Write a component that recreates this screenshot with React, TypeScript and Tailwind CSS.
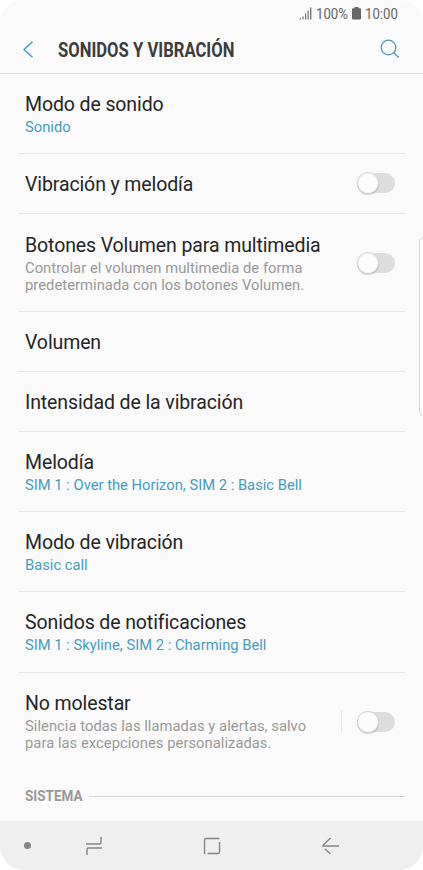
import React from 'react';

function Toggle() {
  return (
    <span role="switch" aria-checked="false" className="relative block h-[20px] w-[36px] shrink-0 rounded-full bg-[#dddddd]">
      <span className="absolute -left-[2px] -top-px h-[22px] w-[22px] rounded-full border border-[#d2d2d2] bg-[#fcfcfc] shadow-[0_1px_1px_rgba(0,0,0,0.18)]" />
    </span>
  );
}

type RowProps = {
  title: string;
  lines?: string[];
  muted?: boolean;
  toggle?: boolean;
  split?: boolean;
  last?: boolean;
  height: string;
  pad?: string;
};

function Row({ title, lines = [], muted, toggle, split, last, height, pad = 'pt-[19px]' }: RowProps) {
  return (
    <div className={`ml-[18px] mr-[18px] flex justify-between border-b pl-[7px] pr-[10px] ${height} ${last ? 'border-transparent' : 'border-[#e8e8e8]'}`}>
      <div className={`whitespace-nowrap ${pad}`}>
        <div className="text-[19.5px] leading-[24px] tracking-[-0.11px] text-[#252525]">{title}</div>
        <div className={`mt-[2px] text-[14.75px] leading-[17px] ${muted ? 'tracking-[0.04px] text-[#999999]' : 'text-[#459dbe]'}`}>
          {lines.map((line) => (
            <div key={line}>{line}</div>
          ))}
        </div>
      </div>
      {toggle && (
        <div className={`flex items-center ${muted ? '' : 'pb-px'}`}>
          {split && <span className="mr-[17px] h-[23px] w-px bg-[#e8e8e8]" />}
          <Toggle />
        </div>
      )}
    </div>
  );
}

export default function App() {
  return (
    <div className="h-[870px] w-[423px] overflow-hidden bg-white font-['Roboto',sans-serif]">
      <div className="relative flex h-full flex-col overflow-hidden rounded-t-[22px] rounded-b-[24px] bg-[#fafafa]">
        <div className="flex h-[27px] shrink-0 items-center justify-end pr-[24px] text-[14.5px] text-[#666666]">
          <svg width="13" height="13" viewBox="0 0 13 13" className="mr-[4px]" fill="#777">
            <path d="M0 12.500h2v-2zM3.500 9.500h1.200v3H3.500zM6 6.500h1.200v6H6zM8.500 3.500h1.200v9H8.500zM11 .5h1.400v12H11z" />
          </svg>
          <span className="block w-[32px] pt-[2px]"><span className="inline-block origin-left scale-x-[0.91]">100%</span></span>
          <svg width="9" height="13" viewBox="0 0 9 13" className="ml-[4px] mr-[4px]" fill="#666">
            <path d="M2.500 0h4v1.200H8a1 1 0 0 1 1 1V11.500a1 1 0 0 1-1 1H1a1 1 0 0 1-1-1V2.200a1 1 0 0 1 1-1h1.500z" />
          </svg>
          <span className="block w-[34px] pt-[2px]"><span className="inline-block origin-left scale-x-[0.91]">10:00</span></span>
        </div>
        <header className="flex h-[47px] shrink-0 items-center border-b border-[#e3e3e3] pl-[23px] pr-[23px]">
          <svg width="11" height="17" viewBox="0 0 11 17" className="mb-px" fill="none" stroke="#459dbe" strokeWidth="1.5">
            <path d="M9.500 .8L1 8.500l8.500 7.700" />
          </svg>
          <h1 className="ml-[24px] w-[300px] whitespace-nowrap pt-[2px] text-[19.5px] font-bold leading-[24px] text-[#3c3c3c]">
            <span className="inline-block origin-left scale-x-[0.853]">SONIDOS Y VIBRACIÓN</span>
          </h1>
          <svg width="20" height="20" viewBox="0 0 20 20" className="mb-[2px] ml-auto shrink-0" fill="none" stroke="#459dbe" strokeWidth="1.3">
            <circle cx="8.500" cy="8.500" r="7.300" />
            <path d="M13.700 13.700L18.800 18.500" />
          </svg>
        </header>
        <main className="flex flex-1 flex-col">
          <Row title="Modo de sonido" lines={['Sonido']} height="h-[80px]" />
          <Row title="Vibración y melodía" toggle height="h-[60px]" />
          <Row title="Botones Volumen para multimedia" lines={['Controlar el volumen multimedia de forma', 'predeterminada con los botones Volumen.']} muted toggle height="h-[98px]" pad="pt-[20px]" />
          <Row title="Volumen" height="h-[60px]" />
          <Row title="Intensidad de la vibración" height="h-[60px]" />
          <Row title="Melodía" lines={['SIM 1 : Over the Horizon, SIM 2 : Basic Bell']} height="h-[80px]" />
          <Row title="Modo de vibración" lines={['Basic call']} height="h-[80px]" />
          <Row title="Sonidos de notificaciones" lines={['SIM 1 : Skyline, SIM 2 : Charming Bell']} height="h-[81px]" />
          <Row title="No molestar" lines={['Silencia todas las llamadas y alertas, salvo', 'para las excepciones personalizadas.']} muted toggle split last height="h-[98px]" />
          <div className="flex h-[50px] items-center pl-[25px] pr-[18px]">
            <span className="block w-[64px] pt-px text-[15.5px] font-bold text-[#999999]"><span className="inline-block origin-left scale-x-[0.87]">SISTEMA</span></span>
            <span className="h-px flex-1 bg-[#d4d4d4]" />
          </div>
        </main>
        <nav className="flex h-[49px] shrink-0 items-center bg-[#efefef]">
          <span className="ml-[24px] h-[7px] w-[7px] rounded-full bg-[#858585]" />
          <svg width="18" height="20" viewBox="0 0 18 20" className="ml-[54px]" fill="none" stroke="#858585" strokeWidth="1.4">
            <path d="M1 8h13.500q1.500 0 1.500-1.500V1M17 12H3.500Q2 12 2 13.500V19" />
          </svg>
          <svg width="18" height="18" viewBox="0 0 18 18" className="ml-[100px]" fill="none" stroke="#858585" strokeWidth="1.4">
            <path d="M1.500 17V3q0-1.500 1.500-1.500h13.500M16.500 5v10q0 1.500-1.500 1.500H4.500" />
          </svg>
          <svg width="17" height="18" viewBox="0 0 17 18" className="ml-[101px]" fill="none" stroke="#858585" strokeWidth="1.4">
            <path d="M8.500 1L1 8.200V9h16M3 12l5.500 5" />
          </svg>
        </nav>
        <div className="absolute left-[419px] top-[237px] h-[179px] w-[10px] rounded-[5px] border border-[#d2d2d2] bg-white" />
      </div>
    </div>
  );
}
